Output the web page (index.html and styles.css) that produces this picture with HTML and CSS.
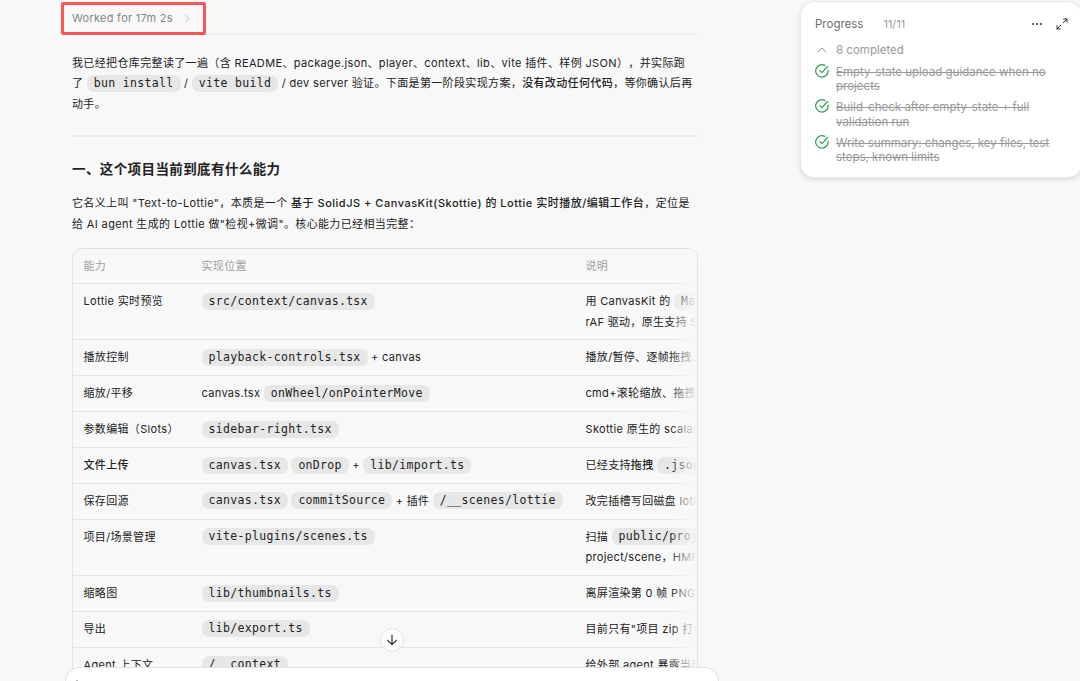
FILE: index.html
```
<!DOCTYPE html>
<html lang="zh-CN">
<head>
    <meta charset="UTF-8">
    <title>Text-to-Lottie</title>
    <link rel="stylesheet" href="styles.css">
</head>
<body>

    <main class="thread">
        <div class="worked">
            <span class="worked-label">Worked for 17m 2s</span>
            <svg class="chevron" viewBox="0 0 6 10"><path d="M1 1l4 4-4 4"/></svg>
            <div class="highlight"></div>
        </div>

        <p class="intro">我已经把仓库完整读了一遍（含 README、package.json、player、context、lib、vite 插件、样例 JSON），并实际跑<br>了 <code>bun install</code> / <code>vite build</code> / dev server 验证。下面是第一阶段实现方案，<strong>没有改动任何代码</strong>，等你确认后再<br>动手。</p>

        <hr>

        <h2>一、这个项目当前到底有什么能力</h2>
        <p class="about">它名义上叫 "Text-to-Lottie"，本质是一个 <strong>基于 SolidJS + CanvasKit(Skottie) 的 Lottie 实时播放/编辑工作台</strong>，定位是<br>给 AI agent 生成的 Lottie 做"检视+微调"。核心能力已经相当完整：</p>

        <div class="table-wrap">
            <table>
                <thead>
                    <tr><th class="col-name">能力</th><th class="col-place">实现位置</th><th>说明</th></tr>
                </thead>
                <tbody>
                    <tr><td>Lottie 实时预览</td><td><code>src/context/canvas.tsx</code></td><td>用 CanvasKit 的 <code>Managed</code><br>rAF 驱动，原生支持 Slots</td></tr>
                    <tr><td>播放控制</td><td><code>playback-controls.tsx</code> + canvas</td><td>播放/暂停、逐帧拖拽、循环</td></tr>
                    <tr><td>缩放/平移</td><td>canvas.tsx <code>onWheel/onPointerMove</code></td><td>cmd+滚轮缩放、拖拽平移</td></tr>
                    <tr><td>参数编辑（Slots）</td><td><code>sidebar-right.tsx</code></td><td>Skottie 原生的 scalar</td></tr>
                    <tr><td class="strong">文件上传</td><td><code>canvas.tsx</code> <code>onDrop</code> + <code>lib/import.ts</code></td><td>已经支持<strong>拖拽</strong> <code>.json</code></td></tr>
                    <tr><td>保存回源</td><td><code>canvas.tsx</code> <code>commitSource</code> + 插件 <code>/__scenes/lottie</code></td><td>改完插槽写回磁盘 lottie</td></tr>
                    <tr><td>项目/场景管理</td><td><code>vite-plugins/scenes.ts</code></td><td>扫描 <code>public/projects</code><br>project/scene，HMR</td></tr>
                    <tr><td>缩略图</td><td><code>lib/thumbnails.ts</code></td><td>离屏渲染第 0 帧 PNG</td></tr>
                    <tr><td>导出</td><td><code>lib/export.ts</code></td><td>目前只有"项目 zip 打包"</td></tr>
                    <tr><td>Agent 上下文</td><td><code>/__context</code></td><td>给外部 agent 暴露当前</td></tr>
                </tbody>
            </table>
        </div>
    </main>

    <aside class="progress">
        <header class="progress-head">
            <span class="progress-title">Progress</span>
            <span class="progress-count">11/11</span>
            <svg class="dots" viewBox="0 0 10 4"><circle cx="1.2" cy="2" r="1"/><circle cx="5" cy="2" r="1"/><circle cx="8.8" cy="2" r="1"/></svg>
            <svg class="expand" viewBox="0 0 12 12"><path d="M7.2 4.8L11 1M7.7 1H11v3.3M4.8 7.2L1 11M1 7.7V11h3.3"/></svg>
        </header>
        <div class="completed">
            <svg class="caret" viewBox="0 0 10 6"><path d="M1 5l4-4 4 4"/></svg>
            <span>8 completed</span>
        </div>
        <ul class="tasks">
            <li>
                <svg class="check" viewBox="0 0 14 14"><path d="M9.9 1.4A6.2 6.2 0 1 0 13.1 6.2M4.8 6.6l2.1 2.1 5.7-6.2"/></svg>
                <span>Empty-state upload guidance when no<br>projects</span>
            </li>
            <li>
                <svg class="check" viewBox="0 0 14 14"><path d="M9.9 1.4A6.2 6.2 0 1 0 13.1 6.2M4.8 6.6l2.1 2.1 5.7-6.2"/></svg>
                <span>Build-check after empty-state + full<br>validation run</span>
            </li>
            <li>
                <svg class="check" viewBox="0 0 14 14"><path d="M9.9 1.4A6.2 6.2 0 1 0 13.1 6.2M4.8 6.6l2.1 2.1 5.7-6.2"/></svg>
                <span>Write summary: changes, key files, test<br>steps, known limits</span>
            </li>
        </ul>
    </aside>

    <button class="scroll-down">
        <svg viewBox="0 0 12 12"><path d="M6 1.2v9.4M1.8 6.5L6 10.7l4.2-4.2"/></svg>
    </button>

    <div class="composer">
        <svg viewBox="0 0 10 10"><path d="M5 0v10M0 5h10"/></svg>
    </div>

</body>
</html>
```
FILE: styles.css
```
* {
    margin: 0;
    padding: 0;
    box-sizing: border-box;
}

body {
    position: relative;
    display: flex;
    justify-content: space-between;
    align-items: flex-start;
    height: 681px;
    overflow: hidden;
    background-color: #f8f8f8;
    color: #222;
    font-family: Inter, "Noto Sans CJK SC", sans-serif;
    font-size: 11px;
    letter-spacing: 0.33px;
    line-height: 20.4px;
    text-spacing-trim: space-all;
}

svg {
    fill: none;
    stroke: currentColor;
    stroke-linecap: round;
    stroke-linejoin: round;
}

.thread {
    width: 627px;
    margin-left: 72px;
    white-space: nowrap;
}

/* Worked for ... */
.worked {
    position: relative;
    display: flex;
    align-items: center;
    height: 35px;
    padding-top: 3px;
    border-bottom: 1px solid #ededed;
    color: #858585;
}

.worked-label {
    letter-spacing: 0.27px;
}

.chevron {
    width: 5px;
    height: 9px;
    margin-left: 12px;
    color: #b5b5b5;
}

.highlight {
    position: absolute;
    left: -11px;
    top: 2px;
    width: 145px;
    height: 33px;
    border: 3px solid #fc5555;
    border-radius: 2px;
}

.intro {
    margin-top: 18px;
    letter-spacing: 0.36px;
}

strong,
.strong {
    font-weight: 500;
}

code {
    display: inline-block;
    height: 17px;
    margin-bottom: 2px;
    padding: 0 7px;
    border-radius: 7px;
    background-color: #e7e7e7;
    font-family: "DejaVu Sans Mono", monospace;
    font-size: 11.5px;
    letter-spacing: 0.32px;
    line-height: 16px;
    vertical-align: middle;
}

hr {
    height: 2px;
    margin-top: 21px;
    border: none;
    background-color: #ededed;
}

h2 {
    margin-top: 21px;
    font-size: 13.5px;
    font-weight: 600;
    letter-spacing: 0.4px;
    line-height: 22px;
}

.about {
    margin-top: 13px;
    letter-spacing: 0.37px;
}

.about strong {
    letter-spacing: 0.51px;
}

/* Capability table */
.table-wrap {
    position: relative;
    width: 626px;
    margin-top: 14px;
    border: 1px solid #e2e2e2;
    border-radius: 10px;
    overflow: hidden;
}

.table-wrap::after {
    content: "";
    position: absolute;
    top: 0;
    right: 0;
    width: 28px;
    height: 100%;
    background: linear-gradient(to right, rgba(248, 248, 248, 0), #f8f8f8);
}

table {
    width: 100%;
    table-layout: fixed;
    border-collapse: separate;
    border-spacing: 0;
}

th,
td {
    padding: 7.2px 0 7.2px 10.5px;
    border-bottom: 1px solid #e4e4e4;
    text-align: left;
    vertical-align: top;
}

th {
    padding-top: 7px;
    padding-bottom: 6.4px;
    color: #a0a0a0;
    font-weight: 400;
}

.col-name {
    width: 118px;
}

.col-place {
    width: 384px;
}

/* Progress panel */
.progress {
    flex: none;
    width: 282px;
    height: 177px;
    margin: 1px -2px 0 0;
    padding: 12px 14px;
    border: 1px solid #e8e8e8;
    border-radius: 14px;
    background-color: #fff;
    box-shadow: 0 2px 5px rgba(0, 0, 0, 0.12);
    color: #999;
    letter-spacing: 0;
    white-space: nowrap;
}

.progress-head {
    display: flex;
    align-items: center;
    height: 20px;
}

.progress-title {
    color: #707070;
    font-size: 11.5px;
}

.progress-count {
    margin-left: 20px;
    font-size: 11px;
}

.dots {
    width: 10px;
    height: 4px;
    margin-left: auto;
    fill: #333;
    stroke: none;
}

.expand {
    width: 12px;
    height: 12px;
    margin: 0 -1px 0 14px;
    color: #333;
}

.completed {
    display: flex;
    align-items: center;
    gap: 9px;
    height: 20px;
    margin-top: 6px;
    padding-left: 2px;
    font-size: 11.5px;
}

.caret {
    width: 10px;
    height: 6px;
}

.tasks {
    list-style: none;
    margin-top: 5px;
}

.tasks li {
    display: flex;
    gap: 7px;
    margin-bottom: 7px;
    font-size: 11.5px;
    line-height: 14.2px;
    text-decoration: line-through;
}

.check {
    flex: none;
    width: 14px;
    height: 14px;
    margin-top: -1px;
    color: #2f9e51;
    stroke-width: 1.2;
}

.scroll-down {
    position: absolute;
    left: 380px;
    top: 628px;
    display: flex;
    justify-content: center;
    align-items: center;
    width: 24px;
    height: 24px;
    border: 1px solid #e0e0e0;
    border-radius: 50%;
    background-color: #fff;
    color: #333;
}

.scroll-down svg {
    width: 12px;
    height: 12px;
    stroke-width: 1.2;
}

/* Message box, pinned over the bottom of the thread */
.composer {
    position: absolute;
    left: 65px;
    bottom: 0;
    width: 654px;
    height: 14px;
    padding: 12px 6px 0;
    border: 1px solid #e2e2e2;
    border-bottom: none;
    border-radius: 16px 16px 0 0;
    background-color: #fff;
    color: #777;
    overflow: hidden;
}

.composer svg {
    display: block;
    width: 10px;
    height: 10px;
}
```
